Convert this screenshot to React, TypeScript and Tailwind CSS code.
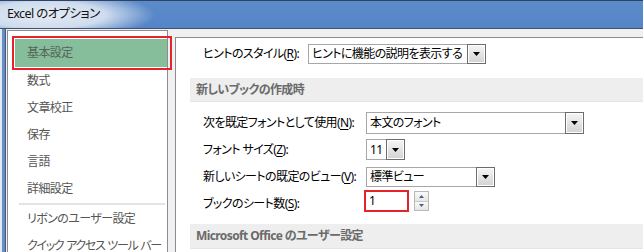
import type { ReactNode } from 'react'

const font = "[font-family:'Noto_Sans','Noto_Sans_CJK_JP',sans-serif] [font-feature-settings:'palt'] tracking-[-0.6px]"

function Arrow() {
  return (
    <svg width="7" height="4" viewBox="0 0 7 4">
      <path d="M0 0h7L3.5 4z" fill="#000" />
    </svg>
  )
}

function DropButton() {
  return (
    <div className="-my-px -mr-px flex w-[19px] shrink-0 items-center justify-center border border-[#6c6c6c] bg-gradient-to-b from-[#f6f6f6] to-[#d2d2d2] shadow-[inset_0_0_0_1px_#ffffff]">
      <Arrow />
    </div>
  )
}

function Select({ className, text }: { className: string; text: string }) {
  return (
    <div className={`flex border border-[#a7a7a7] bg-white ${className}`}>
      <div className="flex flex-1 items-center overflow-hidden whitespace-nowrap pl-[3px] text-[12px] text-black">{text}</div>
      <DropButton />
    </div>
  )
}

function Label({ text, k, className }: { text: string; k: string; className: string }) {
  return (
    <div className={`shrink-0 whitespace-nowrap text-[12px] text-black ${className}`}>
      {text}(<span className="underline underline-offset-2">{k}</span>):
    </div>
  )
}

function Row({ children }: { children: ReactNode }) {
  return <div className="flex h-[27px] items-center pl-[27px]">{children}</div>
}

function Band({ children, className }: { children: ReactNode; className: string }) {
  return (
    <div className={`ml-[14px] flex items-center border-b border-[#e4e4e4] bg-[#eeeeee] pl-[6px] text-[12px] font-bold text-[#6a6a6a] ${className}`}>
      {children}
    </div>
  )
}

const items = ['数式', '文章校正', '保存', '言語', '詳細設定']

export default function App() {
  return (
    <div className={`relative flex h-[252px] w-[643px] flex-col overflow-hidden bg-[#f0f0f0] leading-none ${font}`}>
      {/* title bar */}
      <div className="flex h-[28px] shrink-0 items-center border-t border-[#2f4260] pl-[7px] text-[12.5px] text-[#111] [background:radial-gradient(ellipse_110px_24px_at_45px_14px,#e4ecf5_0%,#cfdcee_55%,rgba(96,140,204,0)_100%),linear-gradient(to_bottom,#5c8bcb,#5585c7)]">
        Excel のオプション
      </div>
      <div className="h-px shrink-0 bg-[#3e516e]" />

      <div className="flex flex-1">
        {/* window frame */}
        <div className="w-[6px] shrink-0 border-r border-[#4b5a70] [background:linear-gradient(to_right,#e3e9f1_0,#e3e9f1_2px,#6b93cb_2px,#5e89c5_5px)]" />

        <div className="flex flex-1 pl-px pt-px">
          {/* category list */}
          <div className="w-[161px] shrink-0 overflow-hidden border border-b-0 border-[#8a8c92] bg-white pt-[8px] text-[12px] text-[#555]">
            <div className="ml-[7px] flex h-[28px] items-center bg-[#86bd9b] pl-[12px] text-[#55655a]">基本設定</div>
            {items.map((t) => (
              <div key={t} className="flex h-[27px] items-center pl-[19px]">{t}</div>
            ))}
            <div className="flex h-[3px] items-center pl-[11px] pr-[2px]">
              <div className="h-[2px] w-full bg-[#e3e3e3]" />
            </div>
            <div className="flex h-[27px] items-center whitespace-nowrap pl-[19px]">リボンのユーザー設定</div>
            <div className="flex h-[27px] items-center whitespace-nowrap pl-[19px] tracking-[-1.3px] [word-spacing:1px]">クイック アクセス ツール バー</div>
          </div>

          {/* options panel */}
          <div className="ml-[7px] mt-[7px] flex-1 border-l border-t border-[#8a8c92] bg-white pt-[2px]">
            <Row>
              <Label text="ヒントのスタイル" k="R" className="w-[105px]" />
              <Select className="h-[20px] w-[178px]" text="ヒントに機能の説明を表示する" />
            </Row>

            <Band className="mt-[11px] h-[24px]">新しいブックの作成時</Band>

            <div className="mt-[7px]">
              <Row>
                <Label text="次を既定フォントとして使用" k="N" className="w-[163px]" />
                <Select className="h-[22px] w-[218px]" text="本文のフォント" />
              </Row>
              <Row>
                <Label text="フォント サイズ" k="Z" className="w-[163px]" />
                <Select className="h-[21px] w-[39px]" text="11" />
              </Row>
              <Row>
                <Label text="新しいシートの既定のビュー" k="V" className="w-[163px]" />
                <Select className="h-[20px] w-[129px]" text="標準ビュー" />
              </Row>
              <Row>
                <Label text="ブックのシート数" k="S" className="w-[161px]" />
                <div className="mb-[5px] flex items-center">
                  <div className="flex h-[22px] w-[45px] items-center border-2 border-[#e5232b] bg-white pl-[3px] text-[12px] text-black">1</div>
                  <div className="ml-[5px] flex h-[20px] w-[15px] flex-col border border-[#b9b9b9]">
                    <div className="flex flex-1 items-center justify-center border-b border-[#c9c9c9] bg-gradient-to-b from-[#fafafa] to-[#e6e6e6]">
                      <svg width="5" height="3" viewBox="0 0 5 3"><path d="M0 3h5L2.5 0z" fill="#4d6185" /></svg>
                    </div>
                    <div className="flex flex-1 items-center justify-center bg-gradient-to-b from-[#fafafa] to-[#e6e6e6]">
                      <svg width="5" height="3" viewBox="0 0 5 3"><path d="M0 0h5L2.5 3z" fill="#4d6185" /></svg>
                    </div>
                  </div>
                </div>
              </Row>
            </div>

            <Band className="mt-[7px] h-[25px]">Microsoft Office のユーザー設定</Band>
          </div>
        </div>
      </div>

      {/* annotation around the selected category */}
      <div className="absolute left-[12px] top-[36px] h-[34px] w-[160px] border-2 border-[#e5232b]" />
    </div>
  )
}
